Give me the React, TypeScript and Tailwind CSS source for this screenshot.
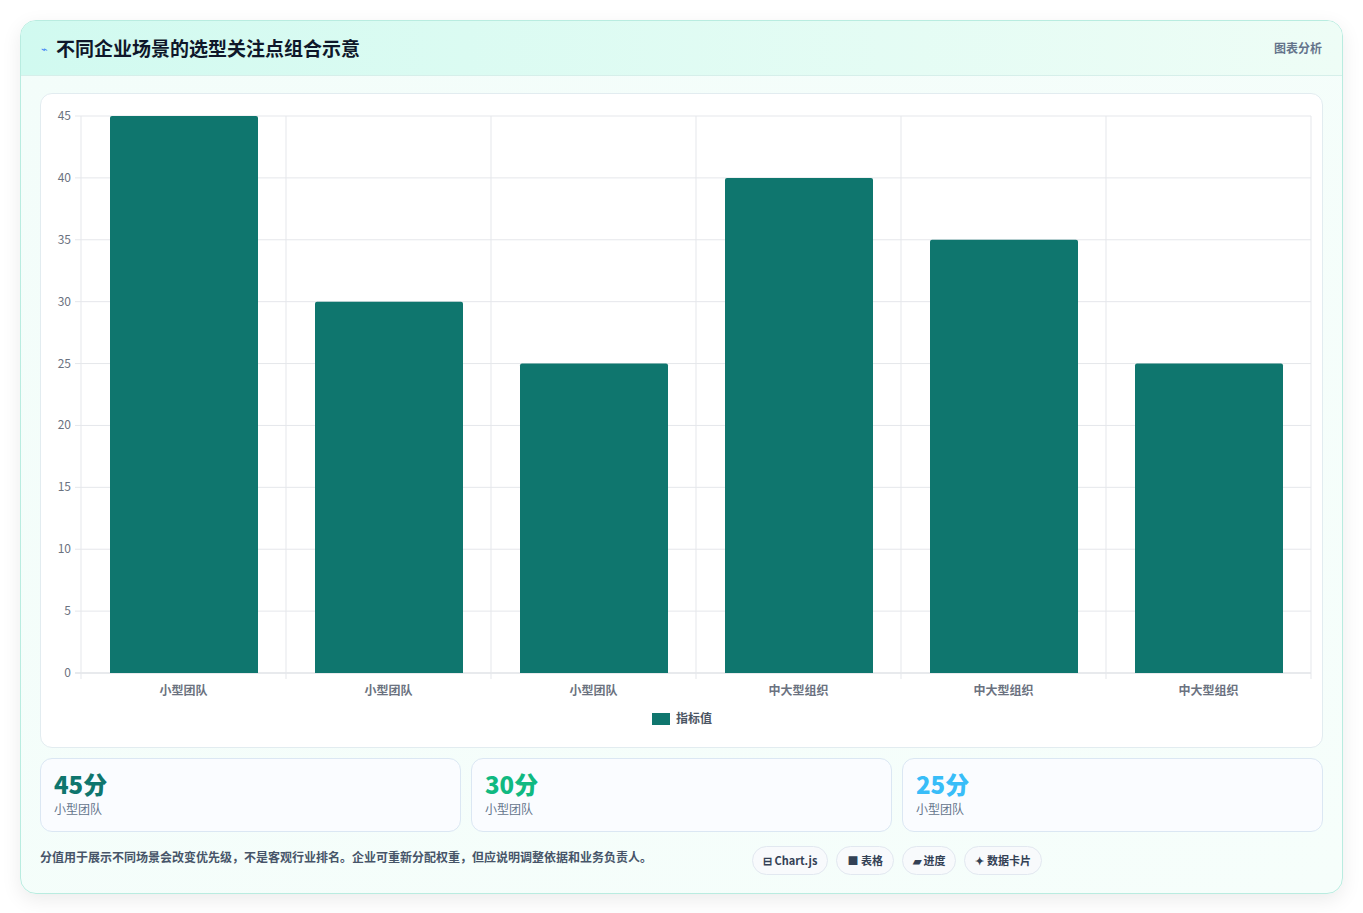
const data = [
  { label: '小型团队', value: 45 },
  { label: '小型团队', value: 30 },
  { label: '小型团队', value: 25 },
  { label: '中大型组织', value: 40 },
  { label: '中大型组织', value: 35 },
  { label: '中大型组织', value: 25 },
];

const stats = [
  { value: '45分', label: '小型团队', color: 'text-[#0f766e]' },
  { value: '30分', label: '小型团队', color: 'text-[#10b981]' },
  { value: '25分', label: '小型团队', color: 'text-[#38bdf8]' },
];

const chips = ['⊟ Chart.js', '■ 表格', '▰ 进度', '✦ 数据卡片'];

// chart geometry (svg coordinates relative to the chart panel)
const W = 1283;
const H = 653;
const left = 40;
const right = 1270;
const top = 22;
const bottom = 579;
const colW = (right - left) / 6;
const yOf = (v: number) => bottom - (v / 45) * (bottom - top);

function BarChart() {
  const ticks = [0, 5, 10, 15, 20, 25, 30, 35, 40, 45];
  return (
    <svg width={W} height={H} className="block">
      {ticks.map(t => (
        <g key={t}>
          <line x1={left - 6} x2={right} y1={yOf(t)} y2={yOf(t)} stroke={t === 0 ? '#d1d5db' : '#e5e7eb'} />
          <text x={left - 10} y={yOf(t) + 4} textAnchor="end" fontSize="12" fill="#6b7280">{t}</text>
        </g>
      ))}
      {Array.from({ length: 7 }).map((_, i) => (
        <line key={i} x1={left + i * colW} x2={left + i * colW} y1={top} y2={bottom + 6} stroke="#e5e7eb" />
      ))}
      {data.map((d, i) => {
        const x = left + i * colW + 29;
        const y = yOf(d.value);
        return (
          <g key={i}>
            <path d={`M${x} ${bottom} V${y + 2} Q${x} ${y} ${x + 2} ${y} H${x + 146} Q${x + 148} ${y} ${x + 148} ${y + 2} V${bottom} Z`} fill="#0f766e" />
            <text x={left + i * colW + colW / 2} y={bottom + 22} textAnchor="middle" fontSize="12" fontWeight="600" fill="#6b7280">{d.label}</text>
          </g>
        );
      })}
      <rect x={611} y={619} width={18} height={12} fill="#0f766e" />
      <text x={635} y={629} fontSize="12" fontWeight="600" fill="#4b5563">指标值</text>
    </svg>
  );
}

export default function App() {
  return (
    <div className="min-h-[913px] bg-white px-5 pt-5 pb-5" style={{ fontFamily: '"Noto Sans CJK SC", "Noto Sans", sans-serif' }}>
      <div className="rounded-2xl border border-[#b9ece0] bg-gradient-to-br from-[#f3fdfa] to-[#f6fefb] shadow-[0_6px_20px_rgba(0,0,0,0.08)] overflow-hidden">
        <div className="h-[55px] flex items-center justify-between px-5 bg-gradient-to-r from-[#d1faf0] to-[#eefdf6] border-b border-[#d6efea]">
          <div className="flex items-center gap-2">
            <span className="text-[11px] text-[#3b82f6]">⌁</span>
            <h1 className="text-[19px] font-bold text-[#0f172a]">不同企业场景的选型关注点组合示意</h1>
          </div>
          <span className="text-[12px] font-semibold text-[#64748b]">图表分析</span>
        </div>
        <div className="px-[19px] pt-[17px] pb-[18px]">
          <div className="rounded-xl border border-[#e2ecf0] bg-white">
            <BarChart />
          </div>
          <div className="grid grid-cols-3 gap-[10px] mt-[10px]">
            {stats.map((s, i) => (
              <div key={i} className="h-[74px] rounded-xl border border-[#dbe7f3] bg-[#fafcff] px-[13px] pt-[9px]">
                <div className={`text-[24px] font-extrabold leading-8 ${s.color}`}>{s.value}</div>
                <div className="text-[12px] text-[#64748b]">{s.label}</div>
              </div>
            ))}
          </div>
          <div className="flex items-center mt-[14px]">
            <p className="text-[12px] font-semibold text-[#475569] w-[712px] -mt-2">分值用于展示不同场景会改变优先级，不是客观行业排名。企业可重新分配权重，但应说明调整依据和业务负责人。</p>
            <div className="flex gap-2">
              {chips.map(c => (
                <span key={c} className="h-[29px] flex items-center rounded-full border border-[#e2e8f0] bg-[#f8fafc] px-[10px] text-[11px] font-bold text-[#334155]">{c}</span>
              ))}
            </div>
          </div>
        </div>
      </div>
    </div>
  );
}
